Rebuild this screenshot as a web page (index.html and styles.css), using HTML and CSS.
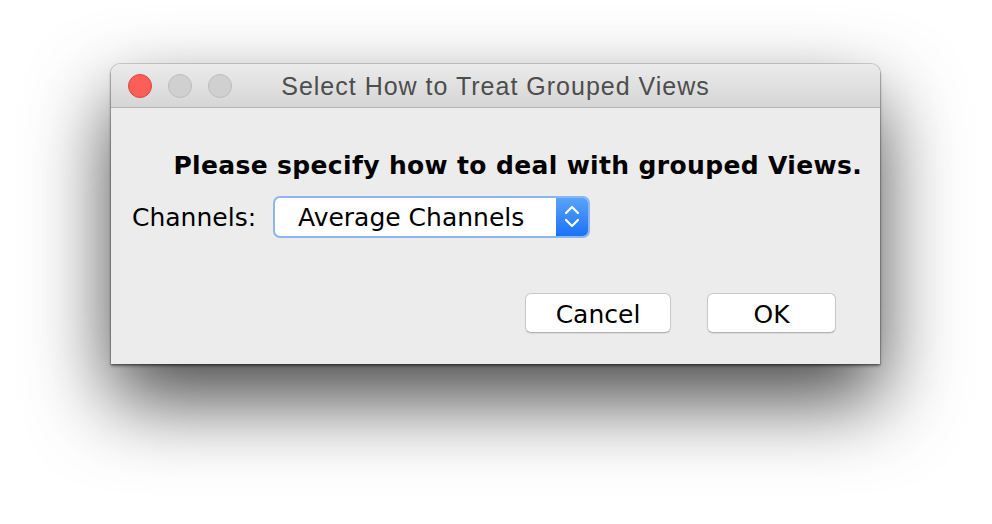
FILE: index.html
```html
<!DOCTYPE html>
<html>
<head>
<meta charset="utf-8">
<link rel="stylesheet" href="styles.css">
</head>
<body>
<div class="window">
  <div class="titlebar">
    <div class="lights">
      <span class="light red"></span>
      <span class="light gray"></span>
      <span class="light gray"></span>
    </div>
    <div class="title">Select How to Treat Grouped Views</div>
  </div>
  <div class="content">
    <div class="heading">Please specify how to deal with grouped Views.</div>
    <div class="row">
      <span class="label">Channels:</span>
      <div class="select">
        <span class="select-text">Average Channels</span>
        <span class="select-arrows">
          <svg width="18" height="28" viewBox="0 0 18 28">
            <path d="M3 10 L9 4 L15 10" fill="none" stroke="#fff" stroke-width="2.2" stroke-linecap="round" stroke-linejoin="round"/>
            <path d="M3 17 L9 23 L15 17" fill="none" stroke="#fff" stroke-width="2.2" stroke-linecap="round" stroke-linejoin="round"/>
          </svg>
        </span>
      </div>
    </div>
    <div class="buttons">
      <button class="btn cancel">Cancel</button>
      <button class="btn ok">OK</button>
    </div>
  </div>
</div>
</body>
</html>
```
FILE: styles.css
```css
html, body {
  margin: 0;
  padding: 0;
  background: #ffffff;
}
body {
  width: 992px;
  height: 524px;
  overflow: hidden;
  padding-top: 64px;
  box-sizing: border-box;
}
.window {
  margin-left: 111px;
  width: 769px;
  height: 300px;
  background: #ececec;
  border-radius: 9px 9px 0 0;
  box-shadow: 0 0 0 1px rgba(0,0,0,0.15), 0 2px 3px rgba(0,0,0,0.45), 0 36px 80px rgba(0,0,0,0.72);
  display: flex;
  flex-direction: column;
  overflow: hidden;
}
.titlebar {
  height: 43px;
  flex: none;
  background: linear-gradient(#ebebeb, #d5d5d5);
  border-bottom: 1px solid #b4b4b4;
  display: flex;
  align-items: center;
  position: relative;
}
.lights {
  display: flex;
  gap: 16px;
  padding-left: 17px;
}
.light {
  width: 24px;
  height: 24px;
  border-radius: 50%;
  box-sizing: border-box;
}
.light.red {
  background: #fc5f57;
  border: 1px solid #e0443e;
}
.light.gray {
  background: #d0d0d0;
  border: 1px solid #bdbdbd;
}
.title {
  position: absolute;
  left: 0;
  right: 0;
  top: 0;
  bottom: 0;
  display: flex;
  align-items: center;
  justify-content: center;
  font-family: "Liberation Sans", Arial, sans-serif;
  font-size: 25px;
  letter-spacing: 1px;
  color: #4d4d4d;
  padding-top: 2px;
  box-sizing: border-box;
  pointer-events: none;
}
.content {
  flex: 1;
  display: flex;
  flex-direction: column;
  font-family: "DejaVu Sans", Verdana, sans-serif;
  color: #000;
}
.heading {
  align-self: flex-end;
  margin-right: 18px;
  margin-top: 43px;
  font-weight: bold;
  font-size: 25px;
  letter-spacing: 0.35px;
  line-height: 30px;
}
.row {
  display: flex;
  align-items: center;
  margin-top: 15px;
  padding-left: 21px;
}
.label {
  font-size: 25px;
  width: 141px;
  line-height: 30px;
  padding-top: 2px;
}
.select {
  width: 317px;
  height: 42px;
  box-sizing: border-box;
  border: 2px solid #8bb6f0;
  border-radius: 7px;
  background: #fff;
  display: flex;
  align-items: center;
  overflow: hidden;
}
.select-text {
  flex: 1;
  font-size: 25px;
  padding-left: 23px;
  line-height: 30px;
  padding-top: 2px;
}
.select-arrows {
  width: 32px;
  height: 100%;
  background: linear-gradient(#5aa2fb, #1a73f6);
  display: flex;
  align-items: center;
  justify-content: center;
}
.buttons {
  display: flex;
  justify-content: flex-end;
  gap: 36px;
  margin-top: 55px;
  padding-right: 44px;
}
.btn {
  height: 40px;
  box-sizing: border-box;
  background: #fff;
  border: 1px solid #c8c8c8;
  border-bottom-color: #b3b3b3;
  border-radius: 6px;
  font-family: "DejaVu Sans", Verdana, sans-serif;
  font-size: 25px;
  color: #000;
  padding: 2px 0 0 0;
  box-shadow: 0 1px 1px rgba(0,0,0,0.08);
}
.btn.cancel { width: 146px; }
.btn.ok { width: 129px; }
```
